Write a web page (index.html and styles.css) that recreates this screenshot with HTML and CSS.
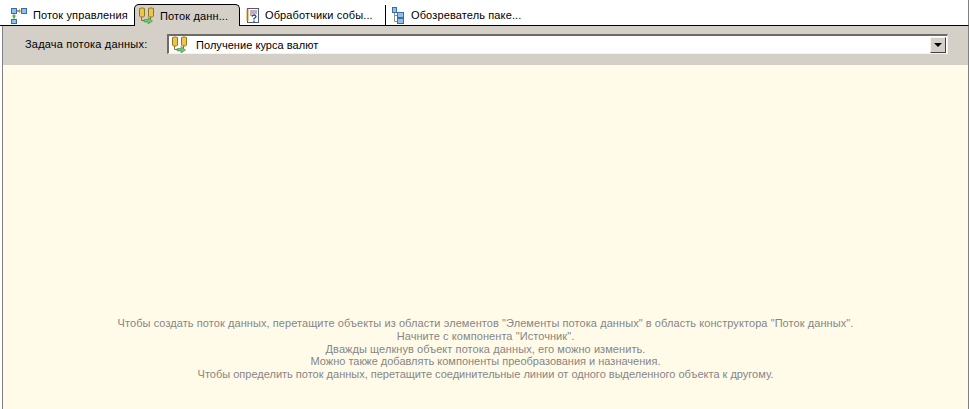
FILE: index.html
```html
<!DOCTYPE html>
<html lang="ru">
<head>
<meta charset="utf-8">
<title>Поток данных</title>
<link rel="stylesheet" href="styles.css">
</head>
<body>
<div class="tabs">
  <div class="tab tab-first">
    <svg class="ico" width="17" height="17" viewBox="0 0 17 17">
      <rect x="1.500" y="1.500" width="5" height="5" fill="#8fc0ea" stroke="#3a6ea8"/>
      <rect x="11.500" y="1.500" width="5" height="5" fill="#8fc0ea" stroke="#3a6ea8"/>
      <rect x="1.500" y="12.500" width="5" height="4" fill="#8fc0ea" stroke="#3a6ea8"/>
      <path d="M7 3h2V1.500L11 4 9 6.500V5H7z" fill="#e08840"/>
      <path d="M4 7l2.500 2.500H5V11l-1 1-1-1V9.500H1.500z" fill="#58b050"/>
    </svg>
    <span>Поток управления</span>
  </div>
  <div class="tab tab-active">
    <svg class="ico" width="17" height="17" viewBox="0 0 17 17"><use href="#flow"/></svg>
    <span>Поток данн...</span>
  </div>
  <div class="tab tab-events">
    <svg class="ico" width="15" height="17" viewBox="0 0 15 17">
      <rect x="2.500" y="1.500" width="11" height="14" fill="#fdfdf8" stroke="#4a5a80"/>
      <path d="M1 3h3M1 5h3M1 7h3M1 9h3M1 11h3M1 13h3" stroke="#c89a40"/>
      <path d="M5 4h7" stroke="#d84040"/>
      <path d="M5 6h7" stroke="#5070b0"/>
      <path d="M5 8h2" stroke="#d84040"/>
      <path d="M7 9.500q.5-1.500 2-1.500t2 1.500q0 1-2 2v1M9 13.500v1.500" fill="none" stroke="#28408a" stroke-width="1.300"/>
    </svg>
    <span>Обработчики собы...</span>
  </div>
  <div class="tab tab-explorer">
    <svg class="ico" width="13" height="17" viewBox="0 0 13 17">
      <rect x="1.500" y="0.500" width="4" height="5" fill="#8fc0ea" stroke="#3a6ea8"/>
      <path d="M3.500 6v8.500H7M3.500 8.500H7" fill="none" stroke="#909090"/>
      <rect x="6.500" y="5.500" width="6" height="5" fill="#8fc0ea" stroke="#3a6ea8"/>
      <rect x="6.500" y="11.500" width="6" height="5" fill="#8fc0ea" stroke="#3a6ea8"/>
    </svg>
    <span>Обозреватель паке...</span>
  </div>
</div>
<main class="panel">
  <div class="toolbar">
    <label class="task-label">Задача потока данных:</label>
    <div class="combo">
      <svg class="ico" width="17" height="17" viewBox="0 0 17 17"><use href="#flow"/></svg>
      <span class="combo-text">Получение курса валют</span>
      <div class="combo-btn"><i class="arrow"></i></div>
    </div>
  </div>
  <div class="canvas">
    <p class="hint-wide">Чтобы создать поток данных, перетащите объекты из области элементов "Элементы потока данных" в область конструктора "Поток данных".</p>
    <p class="hint-wide">Начните с компонента "Источник".</p>
    <p class="hint-mid">Дважды щелкнув объект потока данных, его можно изменить.</p>
    <p>Можно также добавлять компоненты преобразования и назначения.</p>
    <p>Чтобы определить поток данных, перетащите соединительные линии от одного выделенного объекта к другому.</p>
  </div>
</main>
<svg class="defs" width="0" height="0"><defs>
  <g id="flow">
    <path d="M3.500 10v3.500H7M12.500 10v3.500H11" fill="none" stroke="#8a7420"/>
    <path d="M1.500 1.500q2.500-1.200 5 0V9l-1 1h-3l-1-1z" fill="#ecc44e" stroke="#907820"/>
    <path d="M10.500 1.500q2.500-1.200 5 0V9l-1 1h-3l-1-1z" fill="#ecc44e" stroke="#907820"/>
    <path d="M6 12.500h4V10.500l4.500 3.500L10 17v-2H6z" fill="#70c468" stroke="#4a8a58" stroke-width=".6"/>
  </g>
</defs></svg>
</body>
</html>
```
FILE: styles.css
```css
* { box-sizing: border-box; }
html, body { margin: 0; padding: 0; }
body {
  width: 969px;
  height: 409px;
  overflow: hidden;
  background: #fff;
  font-family: "Liberation Sans", Arial, sans-serif;
  font-size: 11px;
  color: #000;
}
.tabs {
  display: flex;
  align-items: flex-end;
  height: 26px;
  border-bottom: 1px solid #000;
  border-right: 1px solid #808080;
}
.tab {
  display: flex;
  align-items: center;
  height: 20px;
  white-space: nowrap;
  letter-spacing: .13px;
}
.ico { flex: none; display: block; }
.tab-first { width: 134px; padding-left: 10px; }
.tab-first span { margin-left: 6px; }
.tab-active {
  width: 106px;
  height: 22px;
  margin-bottom: -1px;
  padding-left: 3px;
  background: #d4d0c8;
  border: 1px solid #000;
  border-bottom: none;
  border-radius: 5px 5px 0 0;
  position: relative;
}
.tab-active span { margin-left: 5px; }
.tab-events {
  width: 146px;
  padding-left: 5px;
  border-right: 1px solid #000;
}
.tab-events span { margin-left: 5px; }
.tab-explorer { padding-left: 5px; }
.tab-explorer span { margin-left: 7px; }
.panel {
  height: 383px;
  margin-left: 2px;
  border-left: 1px solid #808080;
  border-right: 1px solid #808080;
  display: flex;
  flex-direction: column;
  background: #d4d0c8;
}
.toolbar {
  height: 39px;
  display: flex;
  align-items: flex-start;
  padding: 8px 20px 0 22px;
  background: #d4d0c8;
}
.task-label { width: 142px; flex: none; line-height: 20px; letter-spacing: .2px; }
.combo {
  flex: 1;
  height: 20px;
  display: flex;
  align-items: center;
  background: #fff;
  border-top: 2px solid #6d6b66;
  border-left: 2px solid #6d6b66;
  border-right: 1px solid #f4f2ee;
  border-bottom: 1px solid #f4f2ee;
  padding-left: 2px;
}
.combo-text { margin-left: 8px; flex: 1; letter-spacing: .05px; }
.combo-btn {
  width: 16px;
  height: 16px;
  margin-right: 1px;
  background: #d4d0c8;
  border: 1px solid;
  border-color: #f4f2ee #404040 #404040 #f4f2ee;
  display: flex;
  align-items: center;
  justify-content: center;
}
.arrow {
  width: 0;
  height: 0;
  border-left: 4px solid transparent;
  border-right: 4px solid transparent;
  border-top: 4px solid #000;
}
.canvas {
  flex: 1;
  background: #fffbe8;
  color: #868686;
  text-align: center;
  line-height: 12.750px;
  padding-top: 252px;
}
.canvas p { margin: 0; }
.canvas .hint-wide { letter-spacing: .075px; }
.canvas .hint-mid { letter-spacing: .07px; }
.defs { position: absolute; }
```
